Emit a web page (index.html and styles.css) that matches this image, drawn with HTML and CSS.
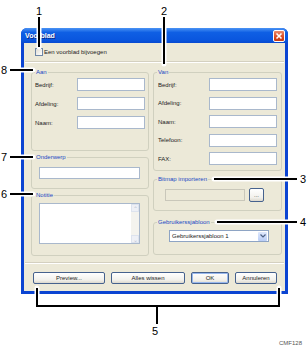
FILE: index.html
```html
<!DOCTYPE html>
<html lang="nl">
<head>
  <meta charset="UTF-8">
  <title>Voorblad</title>
  <link rel="stylesheet" href="styles.css">
</head>
<body>
  <div class="figure">

    <!-- DIALOG -->
    <div class="window">
      <div class="titlebar">
        <span class="title">Voorblad</span>
        <span class="close">
          <svg width="8" height="8" viewBox="0 0 8 8"><path d="M1.5 1.5 L6.5 6.5 M6.5 1.5 L1.5 6.5" stroke="#fff" stroke-width="1.6"/></svg>
        </span>
      </div>

      <div class="client">
        <label class="check"><span class="box"></span>Een voorblad bijvoegen</label>
        <div class="sep"></div>

        <div class="columns">
          <div class="col col-left">
            <fieldset class="grp aan">
              <legend>Aan</legend>
              <div class="fields">
                <div class="row"><span class="lbl">Bedrijf:</span><span class="input"></span></div>
                <div class="row"><span class="lbl">Afdeling:</span><span class="input"></span></div>
                <div class="row"><span class="lbl">Naam:</span><span class="input"></span></div>
              </div>
            </fieldset>

            <fieldset class="grp onderwerp">
              <legend>Onderwerp</legend>
              <span class="input wide"></span>
            </fieldset>

            <fieldset class="grp notitie">
              <legend>Notitie</legend>
              <div class="memo">
                <div class="scroll">
                  <span class="arrow">&#8963;</span>
                  <span class="arrow">&#8964;</span>
                </div>
              </div>
            </fieldset>
          </div>

          <div class="col col-right">
            <fieldset class="grp van">
              <legend>Van</legend>
              <div class="fields">
                <div class="row"><span class="lbl">Bedrijf:</span><span class="input"></span></div>
                <div class="row"><span class="lbl">Afdeling:</span><span class="input"></span></div>
                <div class="row"><span class="lbl">Naam:</span><span class="input"></span></div>
                <div class="row"><span class="lbl">Telefoon:</span><span class="input"></span></div>
                <div class="row"><span class="lbl">FAX:</span><span class="input"></span></div>
              </div>
            </fieldset>

            <fieldset class="grp bitmap">
              <legend>Bitmap importeren</legend>
              <div class="browse">
                <span class="input disabled"></span>
                <span class="btn small">...</span>
              </div>
            </fieldset>

            <fieldset class="grp sjabloon">
              <legend>Gebruikerssjabloon</legend>
              <div class="select">
                <span class="value">Gebruikerssjabloon 1</span>
                <span class="drop">
                  <svg width="6" height="4" viewBox="0 0 6 4"><path d="M0.5 0.5 L3 3 L5.5 0.5" fill="none" stroke="#4d6185" stroke-width="1.2"/></svg>
                </span>
              </div>
            </fieldset>
          </div>
        </div>

        <div class="sep bottom"></div>

        <div class="buttons">
          <span class="btn preview">Preview...</span>
          <span class="btn wissen">Alles wissen</span>
          <span class="btn ok">OK</span>
          <span class="btn annuleren">Annuleren</span>
        </div>
      </div>
    </div>

    <!-- CALLOUTS -->
    <svg class="callouts" width="308" height="348" viewBox="0 0 308 348">
      <g class="halo">
        <path d="M39 17 V47"/>
        <path d="M164 17 V64"/>
        <path d="M10 70 H33"/>
        <path d="M10 157 H33"/>
        <path d="M10 194 H33"/>
        <path d="M214 179 H297"/>
        <path d="M217 222 H297"/>
        <path d="M37 288 V306 H279 V288"/>
        <path d="M157 306 V324"/>
      </g>
      <g class="ink">
        <path d="M39 17 V47"/>
        <path d="M164 17 V64"/>
        <path d="M10 70 H33"/>
        <path d="M10 157 H33"/>
        <path d="M10 194 H33"/>
        <path d="M214 179 H297"/>
        <path d="M217 222 H297"/>
        <path d="M37 288 V306 H279 V288"/>
        <path d="M157 306 V324"/>
      </g>
      <g class="nums">
        <text x="39" y="15">1</text>
        <text x="164" y="15">2</text>
        <text x="4" y="74">8</text>
        <text x="4" y="161">7</text>
        <text x="4" y="198">6</text>
        <text x="303" y="183">3</text>
        <text x="303" y="226">4</text>
        <text x="155" y="335">5</text>
      </g>
      <text class="code" x="302" y="345">CMF128</text>
    </svg>
  </div>
</body>
</html>
```

FILE: styles.css
```css
* {
  box-sizing: border-box;
}

body {
  margin: 0;
  background: #fff;
  font-family: "Liberation Sans", Arial, sans-serif;
}

.figure {
  position: relative;
  width: 308px;
  height: 348px;
  overflow: hidden;
}

/* window frame */
.window {
  margin: 28px 0 0 21px;
  width: 267px;
  padding: 0 3px 3px;
  background: #0b44d2;
  border-radius: 6px 6px 0 0;
}

.titlebar {
  display: flex;
  align-items: center;
  justify-content: space-between;
  height: 15px;
  margin: 0 -3px;
  padding: 0 3px 0 4px;
  border-radius: 6px 6px 0 0;
  background: linear-gradient(#4a93f4, #0f5fe4 30%, #0a56de 80%, #0849d0);
}

.title {
  color: #fff;
  font-weight: bold;
  font-size: 7px;
  text-shadow: 1px 1px 0 #0a2a8a;
}

.close {
  display: flex;
  align-items: center;
  justify-content: center;
  width: 12px;
  height: 12px;
  border: 1px solid #fff;
  border-radius: 2px;
  background: linear-gradient(#eb8a6c, #da4a22 60%, #c63a14);
}

/* client area */
.client {
  display: flex;
  flex-direction: column;
  height: 248px;
  background: #ece9d8;
  font-size: 6px;
  color: #222;
}

.check {
  display: flex;
  align-items: center;
  gap: 1px;
  height: 8px;
  margin: 5px 0 0 11px;
  line-height: 8px;
}

.box {
  width: 8px;
  height: 8px;
  background: linear-gradient(135deg, #e0ddd3, #fff);
  border: 1px solid #6f87a6;
}

.sep {
  height: 2px;
  margin: 5px 1px 0;
  border-top: 1px solid #d4d0c0;
  border-bottom: 1px solid #fff;
}

.sep.bottom {
  margin-top: 6px;
}

.columns {
  display: flex;
  gap: 4px;
  padding: 6px 3px 0 7px;
}

.col {
  display: flex;
  flex-direction: column;
}

.col-left {
  width: 118px;
}

.col-right {
  width: 129px;
}

/* group boxes */
.grp {
  margin: 0;
  padding: 0;
  min-width: 0;
  border: 1px solid #d0d0bf;
  border-radius: 3px;
}

.grp legend {
  margin-left: 3px;
  padding: 0 1px;
  font-size: 6px;
  line-height: 7px;
  color: #2048c4;
}

.aan { height: 82px; }
.onderwerp { height: 35px; margin-top: 3px; }
.notitie { height: 64px; margin-top: 3px; }
.van { height: 102px; }
.bitmap { height: 35px; margin-top: 5px; }
.sjabloon { height: 36px; margin-top: 8px; }

.fields {
  display: flex;
  flex-direction: column;
  gap: 6px;
  margin: 2px 0 0 3px;
}

.van .fields {
  gap: 5.5px;
  margin-left: 4px;
}

.row {
  display: flex;
  align-items: center;
  height: 13px;
}

.lbl {
  width: 42px;
}

.van .lbl {
  width: 51px;
}

.input {
  display: block;
  width: 68px;
  height: 13px;
  background: #fff;
  border: 1px solid #a9b8cc;
}

.input.wide {
  width: 101px;
  height: 12px;
  margin: 6px 0 0 7px;
}

.memo {
  display: flex;
  justify-content: flex-end;
  width: 101px;
  height: 41px;
  margin: 4px 0 0 7px;
  background: #fff;
  border: 1px solid #a9b8cc;
}

.scroll {
  display: flex;
  flex-direction: column;
  justify-content: space-between;
  width: 8px;
  background: #f4f3ee;
}

.arrow {
  height: 8px;
  font-size: 6px;
  line-height: 8px;
  text-align: center;
  color: #b8c2d4;
  background: #eef0f6;
  border: 1px solid #dde3ee;
}

.browse {
  display: flex;
  align-items: center;
  gap: 4px;
  margin: 5px 0 0 11px;
}

.input.disabled {
  width: 80px;
  height: 12px;
  background: #ece9d8;
  border-color: #c9c7ba;
}

.select {
  display: flex;
  align-items: center;
  justify-content: space-between;
  width: 100px;
  height: 12px;
  margin: 4px 0 0 15px;
  padding: 0 1px 0 2px;
  background: #fff;
  border: 1px solid #8ea4c4;
}

.drop {
  display: flex;
  align-items: center;
  justify-content: center;
  width: 9px;
  height: 9px;
  border-radius: 1px;
  background: linear-gradient(#dfe8fc, #b9cdf6);
}

/* buttons */
.buttons {
  display: flex;
  gap: 6px;
  margin: 8px 0 0 9px;
}

.btn {
  display: flex;
  align-items: center;
  justify-content: center;
  height: 12px;
  font-size: 6px;
  color: #222;
  background: linear-gradient(#fff, #f2f1ec 70%, #dcd8cd);
  border: 1px solid #46628e;
  border-radius: 2px;
}

.btn.small {
  width: 15px;
  height: 14px;
  color: #333;
}

.preview { width: 72px; }
.wissen { width: 74px; }
.annuleren { width: 42px; }

.ok {
  width: 38px;
  box-shadow: inset 0 0 0 1px #98b8ee;
}

/* callouts */
.callouts {
  position: absolute;
  top: 0;
  left: 0;
  pointer-events: none;
}

.halo path {
  fill: none;
  stroke: #fff;
  stroke-width: 5;
  stroke-linecap: round;
  stroke-linejoin: round;
}

.ink path {
  fill: none;
  stroke: #000;
  stroke-width: 2;
}

.nums text {
  font-family: "Liberation Sans", Arial, sans-serif;
  font-size: 11px;
  text-anchor: middle;
  fill: #000;
}

.code {
  font-family: "Liberation Sans", Arial, sans-serif;
  font-size: 6px;
  text-anchor: end;
  fill: #555;
}
```
